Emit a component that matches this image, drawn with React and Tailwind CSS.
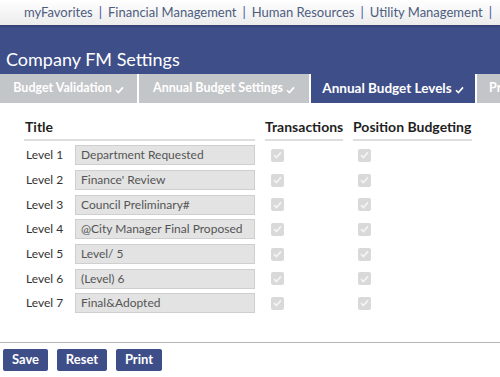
import React from 'react';

const FONT = { fontFamily: '"Segoe UI", Lato, "Open Sans", sans-serif' };

const NAV_LINKS = ['myFavorites', 'Financial Management', 'Human Resources', 'Utility Management'];

const TABS = [
  { label: 'Budget Validation', width: 'w-[137px]', active: false },
  { label: 'Annual Budget Settings', width: 'w-[170px]', active: false },
  { label: 'Annual Budget Levels', width: 'w-[164px]', active: true },
  { label: 'Pr', width: 'flex-1', active: false, cut: true },
];

const LEVELS = [
  'Department Requested',
  "Finance' Review",
  'Council Preliminary#',
  '@City Manager Final Proposed',
  'Level/ 5',
  '(Level) 6',
  'Final&Adopted',
];

// piccolo segno di spunta nelle tab
const TabCheck = () => (
  <svg width="9" height="8" viewBox="0 0 9 8" className="ml-[3px] mt-[3px]">
    <path d="M1 4.2 L3.4 6.6 L8 1.4" fill="none" stroke="white" strokeWidth="1.6" />
  </svg>
);

// checkbox disabilitata, spuntata
const DisabledCheck = () => (
  <div className="w-[13px] h-[13px] rounded-[2px] bg-[#d9d9d9] flex items-center justify-center">
    <svg width="9" height="8" viewBox="0 0 9 8">
      <path d="M1 4.2 L3.4 6.6 L8 1.4" fill="none" stroke="#f4f4f4" strokeWidth="1.7" />
    </svg>
  </div>
);

export default function App() {
  return (
    <div className="w-[500px] h-[377px] bg-white flex flex-col overflow-hidden" style={FONT}>
      {/* Barra di navigazione in alto */}
      <div className="h-[25px] bg-gradient-to-b from-white to-[#ececec] shadow-[0_1px_2px_rgba(0,0,0,0.25)] flex items-center pl-[24px] text-[13px] text-[#4d5d80] whitespace-nowrap relative z-10">
        {NAV_LINKS.map((link) => (
          <React.Fragment key={link}>
            <span>{link}</span>
            <span className="mx-[6px] text-[#3d51a6]">|</span>
          </React.Fragment>
        ))}
      </div>

      {/* Intestazione */}
      <div className="h-[49px] bg-[#3e4e89] flex items-end pl-[6px] pb-[3px]">
        <span className="text-white text-[18px] leading-[24px]">Company FM Settings</span>
      </div>

      {/* Tab */}
      <div className="h-[29px] flex gap-[2px] bg-white">
        {TABS.map((tab) => (
          <div
            key={tab.label}
            className={`${tab.width} flex items-center ${tab.cut ? 'justify-start pl-[12px]' : 'justify-center'} text-white font-bold ${tab.active ? 'text-[13.5px] bg-[#3e4e89]' : 'text-[12.5px] bg-[#c3c6c9]'} whitespace-nowrap overflow-hidden`}
          >
            <span>{tab.label}</span>
            {!tab.cut && <TabCheck />}
          </div>
        ))}
      </div>

      {/* Contenuto */}
      <div className="flex-1 pl-[24px] pt-[13px]">
        <div className="flex text-[14px] font-bold text-[#1f1f1f]">
          <div className="w-[231px] border-b-2 border-[#dedede] pb-[2px] pl-[1px]">Title</div>
          <div className="w-[78px] ml-[10px] border-b-2 border-[#dedede] pb-[2px]">Transactions</div>
          <div className="w-[119px] ml-[10px] border-b-2 border-[#dedede] pb-[2px] whitespace-nowrap">Position Budgeting</div>
        </div>

        <div className="pt-[2px]">
          {LEVELS.map((title, i) => (
            <div key={title} className="flex items-center h-[24.7px]">
              <div className="w-[51px] pl-[2px] text-[12px] text-[#333]">Level {i + 1}</div>
              <div className="w-[180px] h-[20px] bg-[#e3e3e3] border border-[#cfcfcf] flex items-center pl-[5px] text-[12px] text-[#555] whitespace-nowrap overflow-hidden">
                {title}
              </div>
              <div className="w-[88px] pl-[16px]">
                <DisabledCheck />
              </div>
              <div className="pl-[15px]">
                <DisabledCheck />
              </div>
            </div>
          ))}
        </div>
      </div>

      {/* Pulsanti */}
      <div className="border-t border-[#b5b5b5] h-[35px] flex items-start gap-[9px] pl-[3px] pt-[6px]">
        <button className="w-[45px] h-[22px] bg-[#3e4e89] rounded-[2px] text-white font-bold text-[13px]">Save</button>
        <button className="w-[50px] h-[22px] bg-[#3e4e89] rounded-[2px] text-white font-bold text-[13px]">Reset</button>
        <button className="w-[46px] h-[22px] bg-[#3e4e89] rounded-[2px] text-white font-bold text-[13px]">Print</button>
      </div>
    </div>
  );
}
